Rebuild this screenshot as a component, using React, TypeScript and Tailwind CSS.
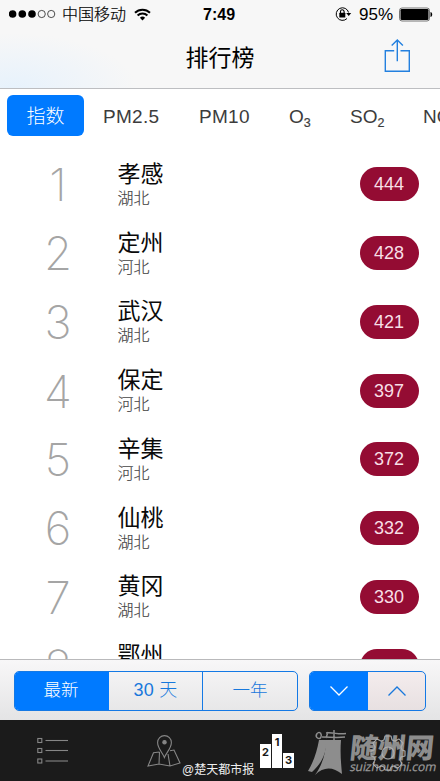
import React from "react";

const sans = "font-['Liberation_Sans','Noto_Sans_CJK_SC',sans-serif]";

const gearPath =
  "m14 5 1-4h6l1 4 3 1 4-2 4 4-2 4 1 3 3 1v5l-4 1-1 3 2 4-4 4-4-2-3 1-1 3h-5l-1-3-3-1-4 2-4-4 2-4-1-3-3-1v-5l3-1 1-3-2-4 4-4 4 2Z";

const cities = [
  { name: "孝感", province: "湖北", value: 444 },
  { name: "定州", province: "河北", value: 428 },
  { name: "武汉", province: "湖北", value: 421 },
  { name: "保定", province: "河北", value: 397 },
  { name: "辛集", province: "河北", value: 372 },
  { name: "仙桃", province: "湖北", value: 332 },
  { name: "黄冈", province: "湖北", value: 330 },
  { name: "鄂州", province: "湖北", value: 324 },
];

function StatusBar() {
  return (
    <div className="relative flex h-7 items-center justify-between pl-[9px] pr-[7px] text-black">
      <div className="flex items-center">
        <svg width="47" height="10" viewBox="0 0 47 10">
          {[3.6, 13.3, 23].map((x) => (
            <circle key={x} cx={x} cy="5" r="3.8" />
          ))}
          {[32.7, 42.2].map((x) => (
            <circle key={x} cx={x} cy="5" r="3.6" fill="none" stroke="#222" strokeWidth="0.8" />
          ))}
        </svg>
        <span className="ml-[6px] pt-px text-[16px] leading-7 font-light [-webkit-text-stroke:0.2px]">中国移动</span>
        <svg className="ml-[8px]" width="17" height="13" viewBox="0 0 17 13" fill="none" stroke="#000" strokeWidth="2">
          <path d="M1 4.8a10.6 10.6 0 0 1 15 0" />
          <path d="M3.6 7.5a6.9 6.9 0 0 1 9.8 0" />
          <path d="M8.5 12.5 5.9 9.8a3.8 3.8 0 0 1 5.2 0z" fill="#000" stroke="none" />
        </svg>
      </div>
      <span className="absolute left-[203px] top-0 text-[16px] leading-[29px] font-bold">7:49</span>
      <div className="flex items-center">
        <svg className="-ml-[2px]" width="19" height="16" viewBox="0 0 19 16">
          <path d="M13 12.5A6.3 6.3 0 1 1 14.600 6.500" fill="none" stroke="#000" strokeWidth="1" />
          <path d="M12.200 7h5l-2.500 3z" />
          <rect x="5.300" y="6.800" width="6" height="4.600" rx="0.500" />
          <path d="M6.500 7V5.600a1.800 1.800 0 0 1 3.600 0V7" fill="none" stroke="#000" strokeWidth="1.100" />
        </svg>
        <span className="ml-[6px] text-[17px] leading-[29px]">95%</span>
        <svg className="ml-[6px]" width="34" height="15" viewBox="0 0 34 15">
          <rect x="0.5" y="1" width="30" height="13" rx="2.5" fill="none" stroke="#555" strokeWidth="0.8" />
          <rect x="1.5" y="2" width="28" height="11" rx="1.300" />
          <path d="M31.5 5c2.3.5 2.3 4.5 0 5z" />
        </svg>
      </div>
    </div>
  );
}

function NavBar() {
  return (
    <div className="relative h-[60px]">
      <h1 className="pt-[13px] text-center text-[23px] leading-[34px] font-normal text-black">排行榜</h1>
      <svg className="absolute left-[384px] top-[10px]" width="27" height="35" viewBox="0 0 27 35" fill="none" stroke="#2380df" strokeWidth="1.4">
        <path d="M10.2 12.8H1.3v20.5h24V12.8h-8.8M13.3 23.2V2M7.7 7.6 13.3 2l5.6 5.6" />
      </svg>
    </div>
  );
}

function PollutantTabs() {
  return (
    <div className="flex h-[61px] shrink-0 items-start overflow-hidden whitespace-nowrap pl-[7px] pt-[6px] text-[19px] leading-[43px] text-[#3c3c3c]">
      <span className="h-[41px] w-[77px] shrink-0 rounded-[6px] bg-[#007aff] text-center font-light text-white">指数</span>
      <span className="ml-[19px] w-[96px] shrink-0 tracking-[0.3px]">PM2.5</span>
      <span className="w-[90px] shrink-0 tracking-[0.3px]">PM10</span>
      <span className="w-[61px] shrink-0">O<span className="relative top-[4px] text-[12.5px] [-webkit-text-stroke:0.2px]">3</span></span>
      <span className="w-[73px] shrink-0">SO<span className="relative top-[4px] text-[12.5px] [-webkit-text-stroke:0.2px]">2</span></span>
      <span className="shrink-0">NO<span className="relative top-[4px] text-[12.5px]">2</span></span>
    </div>
  );
}

function Ranking() {
  return (
    <ol className="min-h-0 flex-1 overflow-hidden">
      {cities.map((city, index) => (
        <li key={city.name} className="flex h-[68.75px] items-center">
          <span className="w-[116px] pt-[2px] text-center font-['Inter',sans-serif] text-[45.5px] leading-[60px] font-extralight text-[#a5a5a5]">
            {index + 1}
          </span>
          <div className="ml-[1.5px] flex-1 pt-[1px]">
            <div className="text-[23px] leading-[28px] text-[#0a0a0a]">{city.name}</div>
            <div className="text-[16px] leading-[22px] font-light text-[#444] [-webkit-text-stroke:0.15px]">{city.province}</div>
          </div>
          <span className="mr-[21px] h-[34px] w-[59px] rounded-full bg-[#940c33] pr-px text-center text-[18px] leading-[35px] text-[#f8dfe6]">
            {city.value}
          </span>
        </li>
      ))}
    </ol>
  );
}

function Filters() {
  return (
    <div className="flex h-[61px] shrink-0 items-start border-t border-[#b9b9bb] bg-linear-to-b from-[#f8f7f8] to-[#e4e4e5] pl-[14px] pt-[11px] text-[18px] leading-[37px] font-light text-[#1878dc]">
      <div className="flex h-10 w-[284px] overflow-hidden rounded-[5px] border border-[#1479e5] text-center">
        <span className="w-[94px] pr-[2px] bg-[#007aff] text-[17.5px] text-white">最新</span>
        <span className="w-[94px] border-r border-[#1479e5] font-normal tracking-[0.3px]">30 <span className="font-light">天</span></span>
        <span className="flex-1 text-[17.5px]">一年</span>
      </div>
      <div className="ml-[11px] flex h-10 w-[117px] overflow-hidden rounded-[5px] border border-[#1479e5]">
        <span className="flex w-[58px] items-center justify-center bg-[#007aff]">
          <svg width="20" height="12" viewBox="0 0 20 12" fill="none" stroke="#fff" strokeWidth="1.3">
            <path d="m1.5 1.5 8.5 8.5 8.5-8.5" />
          </svg>
        </span>
        <span className="flex flex-1 items-center justify-center bg-[#ff2020]/3">
          <svg width="20" height="12" viewBox="0 0 20 12" fill="none" stroke="#1878dc" strokeWidth="1.3">
            <path d="m1.5 10.5 8.5-8.5 8.5 8.5" />
          </svg>
        </span>
      </div>
    </div>
  );
}

function Watermark() {
  return (
    <div className="absolute left-[307px] top-[9px] flex items-start text-[#8d8d8d]">
      <svg width="41" height="48" viewBox="0 0 41 48" fill="#8d8d8d">
        <g fill="none" stroke="#8d8d8d" strokeWidth="1.5">
          <path d="M39 4.5c-8 1.500-12-1.500-20-.5M38 8c-9 1-14 0-23 0M13.500 4c-3-2-6 3-3 5s5-2 3-5M21 3l-2 6M27 1v10" />
        </g>
        <path d="M12 11h8C19 25 15 34 5 43L1 42C7 32 10 22 12 11Z" />
        <path d="M19 11h15c-1 13 0 23 1 34-9-7-18-8-27 1 7-10 11-21 11-35Z" />
      </svg>
      <div className="ml-[2px] pt-[4px]">
        <div className="-skew-x-6 text-[28px] leading-[31px] font-black">随州网</div>
        <div className="-mt-[4px] w-[86px] -skew-x-12 font-['Open_Sans',sans-serif] text-[12px] leading-[14px] tracking-[-0.05px] text-[#999] [-webkit-text-stroke:0.25px]">suizhoushi.com</div>
      </div>
    </div>
  );
}

function TabBar() {
  return (
    <nav className="relative h-[61px] shrink-0 bg-[#1b1b1b]">
      <div className="flex h-full items-start">
        <svg className="ml-[37px] mt-[17px]" width="32" height="28" viewBox="0 0 32 28" fill="none" stroke="#868686" strokeWidth="1.1">
          {[3.5, 13.5, 24].map((y) => (
            <g key={y}>
              <rect x="0.8" y={y - 2} width="4" height="4" />
              <path d={`M8.5 ${y}H31`} />
            </g>
          ))}
        </svg>
        <svg className="ml-[78px] mt-[14px]" width="34" height="34" viewBox="0 0 34 34" fill="none" stroke="#868686" strokeWidth="1.1">
          <path d="M17.4 23.5c-2-5-6.8-9.3-6.8-15a6.8 6.8 0 0 1 13.8 0c0 5.700-5 10-7 15Z" />
          <circle cx="17.5" cy="8.300" r="1.700" fill="#868686" />
          <path d="m12.500 18-6 .8L1 32l11-2 11 2 10-3-6-13-4 .8M12.500 18 12 30M21 20l2 12" />
        </svg>
        <div className="ml-[79px] mt-[14px] flex items-end gap-px font-['Inter',sans-serif] text-[11px] font-bold text-[#171717]">
          <span className="h-[24px] w-[11px] bg-white pt-[1px] text-center leading-[14px]">2</span>
          <span className="h-[34px] w-[10px] bg-white pt-[1px] text-center leading-[14px]">1</span>
          <span className="h-[15px] w-[11px] bg-white text-center leading-[14px]">3</span>
        </div>
      </div>
      <svg className="absolute left-[370px] top-[15px]" width="36" height="36" viewBox="0 0 36 36" fill="none" stroke="#777" strokeWidth="1">
        <path d={gearPath} />
        <circle cx="18" cy="18" r="6" />
      </svg>
      <Watermark />
      <svg className="absolute left-[370px] top-[15px]" width="36" height="36" viewBox="0 0 36 36" fill="none" stroke="#ccc" strokeWidth="1.2" opacity="0.5">
        <path d={gearPath} />
        <circle cx="18" cy="18" r="6" />
      </svg>
      <span className="absolute left-[182px] top-[41px] whitespace-nowrap text-[12px] leading-[18px] text-[#eee]">@楚天都市报</span>
    </nav>
  );
}

export default function App() {
  return (
    <main className={`${sans} flex h-[781px] w-[440px] flex-col overflow-hidden bg-white`}>
      <header className="h-[89px] shrink-0 border-b border-[#bdbec1] bg-[#f7f7f7] bg-[radial-gradient(ellipse_125px_55px_at_12px_100%,#e7f2fc,transparent)]">
        <StatusBar />
        <NavBar />
      </header>
      <PollutantTabs />
      <Ranking />
      <Filters />
      <TabBar />
    </main>
  );
}
